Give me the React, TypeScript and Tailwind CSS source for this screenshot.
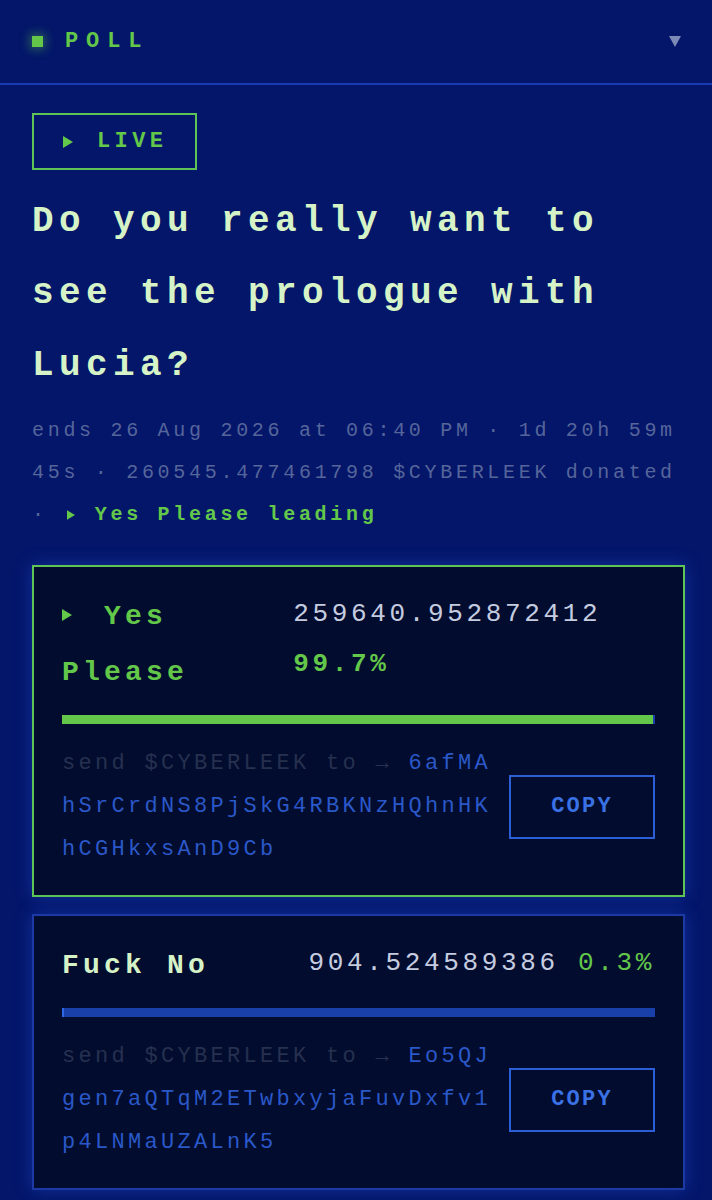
import React from "react";

type Option = {
  name: string;
  amount: string;
  pct: number;
  address: string;
  leading?: boolean;
};

const options: Option[] = [
  {
    name: "Yes Please",
    amount: "259640.952872412",
    pct: 99.7,
    address: "6afMAhSrCrdNS8PjSkG4RBKNzHQhnHKhCGHkxsAnD9Cb",
    leading: true,
  },
  {
    name: "Fuck No",
    amount: "904.524589386",
    pct: 0.3,
    address: "Eo5QJgen7aQTqM2ETwbxyjaFuvDxfv1p4LNMaUZALnK5",
  },
];

const Tri = ({ className }: { className?: string }) => (
  <svg viewBox="0 0 10 12" className={className} fill="currentColor">
    <polygon points="0,0 10,6 0,12" />
  </svg>
);

const OptionCard = ({ option }: { option: Option }) => {
  const lead = option.leading;
  return (
    <div
      className={`border-2 bg-[#020c2e] px-[28px] pt-[22px] pb-[24px] shadow-[0_0_16px_rgba(40,80,210,0.45)] ${
        lead ? "border-[#5ec456]" : "border-[#1c3aa6]"
      }`}
    >
      <div className="flex items-start justify-between gap-4">
        <div
          className={`min-w-0 text-[28px] font-bold leading-[56px] tracking-[0.15em] ${
            lead ? "text-[#63c84a]" : "text-[#d6f3c8]"
          }`}
        >
          {lead && (
            <span className="inline-flex w-[42px] items-center align-middle">
              <Tri className="h-[12px] w-[10px] -translate-y-[2px]" />
            </span>
          )}
          {option.name}
        </div>
        <div className="min-w-0 text-left text-[26px] leading-[50px] tracking-[0.14em] text-[#c6cce0]">
          {option.amount}{" "}
          <span className={`text-[#63c84a] ${lead ? "font-bold" : ""}`}>
            {option.pct}%
          </span>
        </div>
      </div>

      <div className="mt-[14px] h-[9px] w-full bg-[#1840a8]">
        <div
          className={`h-full ${lead ? "bg-[#63c84a]" : "bg-[#2e66e6]"}`}
          style={{ width: `${option.pct}%` }}
        />
      </div>

      <div className="mt-[18px] flex items-center gap-4">
        <p className="min-w-0 flex-1 text-[22px] leading-[43px] tracking-[0.15em] text-[#26304f]">
          send $CYBERLEEK to →{" "}
          <span className="break-all text-[#2a58c8]">{option.address}</span>
        </p>
        <button className="h-[64px] w-[146px] shrink-0 border-2 border-[#2c5fd6] text-[22px] font-bold tracking-[0.1em] text-[#3a72e6]">
          COPY
        </button>
      </div>
    </div>
  );
};

export default function App() {
  return (
    <div className="min-h-screen bg-[#03166a] font-['Liberation_Mono',monospace]">
      <header className="flex h-[85px] items-center justify-between border-b-2 border-[#1a3cb2] pr-[31px] pl-8">
        <div className="flex items-center gap-[22px]">
          <span className="size-[11px] bg-[#63c84a] shadow-[0_0_10px_3px_rgba(99,200,74,0.35)]" />
          <span className="text-[22px] font-bold tracking-[0.36em] text-[#63c84a]">
            POLL
          </span>
        </div>
        <svg viewBox="0 0 12 11" className="h-[11px] w-[12px] text-[#7d8ab8]" fill="currentColor">
          <polygon points="0,0 12,0 6,11" />
        </svg>
      </header>

      <main className="pt-[28px] pr-[27px] pb-6 pl-8">
        <div className="flex h-[57px] w-[165px] items-center gap-[24px] border-2 border-[#5ec456] pl-[29px] text-[#63c84a]">
          <Tri className="h-[12px] w-[10px]" />
          <span className="text-[22px] font-bold tracking-[0.2em]">LIVE</span>
        </div>

        <h1 className="mt-4 text-[36px] font-bold leading-[72px] tracking-[0.15em] text-[#d6f3c8]">
          Do you really want to see the prologue with Lucia?
        </h1>

        <p className="mt-2 text-[20px] leading-[42px] tracking-[0.185em] text-[#56659a]">
          ends 26 Aug 2026 at 06:40 PM · 1d 20h 59m 45s · 260545.477461798
          $CYBERLEEK donated ·{" "}
          <span className="font-bold text-[#63c84a]">
            <span className="inline-flex w-[15.7px] items-center justify-center">
              <Tri className="h-[10px] w-[8px]" />
            </span>{" "}
            Yes Please leading
          </span>
        </p>

        <div className="mt-[29px] flex flex-col gap-[17px]">
          {options.map((o) => (
            <OptionCard key={o.name} option={o} />
          ))}
        </div>
      </main>
    </div>
  );
}
